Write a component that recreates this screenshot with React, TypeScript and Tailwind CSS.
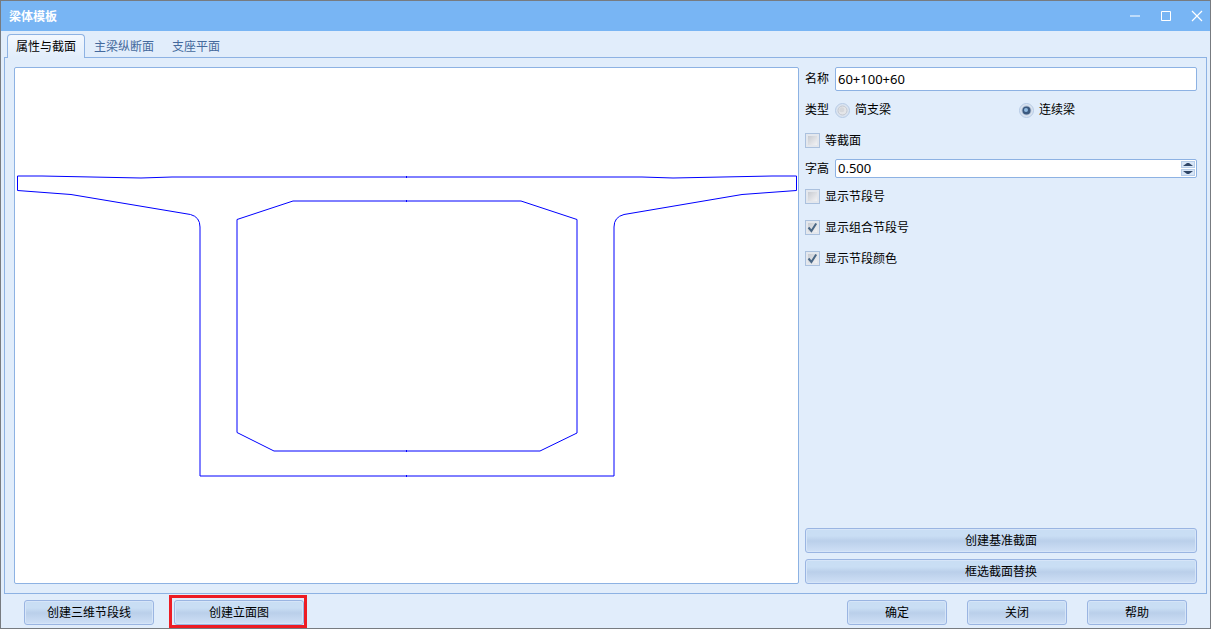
import { useState, type ReactNode } from "react";

function PushButton({ children, className = "" }: { children: ReactNode; className?: string }) {
  return (
    <button
      type="button"
      className={`h-[25px] rounded-[3px] border border-[#9ab5e2] bg-linear-to-b from-[#c9def4] from-30% via-[#bacfea] via-52% to-[#cfe0f6] text-black inset-shadow-[0_0_0_1px_#d6e5f8] ${className}`}
    >
      {children}
    </button>
  );
}

function CheckRow({ label, initial = false, className = "" }: { label: string; initial?: boolean; className?: string }) {
  const [checked, setChecked] = useState(initial);
  return (
    <label className={`flex h-[15px] items-center gap-[5px] ${className}`}>
      <span className="grid size-[15px]">
        <input
          type="checkbox"
          checked={checked}
          onChange={() => setChecked(!checked)}
          className="col-start-1 row-start-1 size-[15px] appearance-none border border-[#abc1de] bg-linear-to-br from-[#bfc3ca] to-[#fbfbfc] inset-shadow-[0_0_0_2px_#e3e7ed]"
        />
        {checked && (
          <svg viewBox="0 0 15 15" className="pointer-events-none col-start-1 row-start-1 size-[15px]">
            <path d="M3.5 7.5 6.4 11 11.2 3.5" fill="none" stroke="#4a6785" strokeWidth="2" />
          </svg>
        )}
      </span>
      {label}
    </label>
  );
}

function RadioOption({ label, checked, onSelect }: { label: string; checked: boolean; onSelect: () => void }) {
  return (
    <label className="flex h-[15px] items-center gap-[5px]">
      <span className="grid size-[15px]">
        <input
          type="radio"
          name="beam-type"
          checked={checked}
          onChange={onSelect}
          className="col-start-1 row-start-1 size-[15px] appearance-none rounded-full border border-[#b6cbe6] bg-[#dbe4f0]"
        />
        <svg viewBox="0 0 15 15" className="pointer-events-none col-start-1 row-start-1 size-[15px]">
          {checked ? (
            <>
              <circle cx="7.5" cy="7.5" r="5" fill="#b3c1d5" />
              <circle cx="7.5" cy="7.5" r="4" fill="#3b597f" />
              <circle cx="7" cy="7" r="2" fill="#8fb9df" />
            </>
          ) : (
            <>
              <circle cx="7.5" cy="7.5" r="4.5" fill="#e4e6e9" stroke="#c4c9d1" />
              <circle cx="6.8" cy="6.8" r="2.5" fill="#d6d8dc" />
            </>
          )}
        </svg>
      </span>
      {label}
    </label>
  );
}

function SectionDrawing() {
  return (
    <svg
      viewBox="15 68 783 515"
      className="h-full w-full"
      fill="none"
      stroke="#0000ff"
      strokeWidth="1"
      role="img"
      aria-label="截面"
    >
      <path d="M17.5 176 H42 L141 178 L172 177 H642 L673 178 L772 176 H796.5 V190.5 L742 194.5 L624 214.5 Q614 217 614 227 V476 H200 V227 Q200 217 190.5 214.5 L71 194.5 L17.5 190.5 Z" />
      <path d="M293 201 H521 L577 219.5 V433 L540 451 H274 L237 432.5 V219.5 Z" />
      <path d="M406.5 176V178M406.5 200V202M406.5 450V452M406.5 475V477" />
    </svg>
  );
}

const tabs = ["属性与截面", "主梁纵断面", "支座平面"];

export default function App() {
  const [tab, setTab] = useState(0);
  const [beamType, setBeamType] = useState("continuous");
  const [name, setName] = useState("60+100+60");
  const [textHeight, setTextHeight] = useState(0.5);

  return (
    <div className="flex min-h-screen flex-col border border-[#777b80] bg-[#e1edfb] font-['Noto_Sans','Noto_Sans_CJK_SC',sans-serif] text-xs text-black">
      <header className="flex h-[30px] items-center justify-between bg-[#78b5f4] pl-2 text-white">
        <h1 className="pt-[2px] text-xs font-bold">梁体模板</h1>
        <div className="flex gap-1">
          <button type="button" aria-label="最小化" className="grid h-[30px] w-[27px] place-items-center">
            <svg viewBox="0 0 12 12" className="size-3" stroke="#bddbfa" strokeWidth="2">
              <path d="M1 6H11" />
            </svg>
          </button>
          <button type="button" aria-label="最大化" className="grid h-[30px] w-[27px] place-items-center">
            <svg viewBox="0 0 12 12" className="size-3" fill="none" stroke="white">
              <path d="M1.5 1.5H10.5V10.5H1.5Z" />
            </svg>
          </button>
          <button type="button" aria-label="关闭窗口" className="grid h-[30px] w-[27px] place-items-center">
            <svg viewBox="0 0 12 12" className="size-3" stroke="white" strokeWidth="1.2">
              <path d="M1 1 11 11M11 1 1 11" />
            </svg>
          </button>
        </div>
      </header>

      <main className="flex grow flex-col px-[3px] pt-[3px]">
        <div role="tablist" className="flex h-[23px] pl-[3px]">
          {tabs.map((label, i) => (
            <button
              key={label}
              type="button"
              role="tab"
              aria-selected={tab === i}
              onClick={() => setTab(i)}
              className={
                tab === i
                  ? "z-10 -mb-px rounded-t border border-b-0 border-[#8db2e3] bg-linear-to-b from-[#f3f8fe] to-[#e1edfb] px-2 text-black"
                  : "px-[9px] pt-[2px] text-[#44699c]"
              }
            >
              {label}
            </button>
          ))}
        </div>

        <section className="flex grow gap-[6px] border border-[#8db2e3] p-[9px]">
          <div className="h-[517px] min-w-0 grow basis-0 rounded-xs border border-[#8db2e3] bg-white">
            <SectionDrawing />
          </div>

          <form className="flex w-[392px] shrink-0 flex-col" onSubmit={(e) => e.preventDefault()}>
            <div className="flex h-6 items-center gap-[6px]">
              <label htmlFor="beam-name" className="w-6">名称</label>
              <input
                id="beam-name"
                type="text"
                value={name}
                onChange={(e) => setName(e.target.value)}
                className="h-6 min-w-0 grow rounded-xs border border-[#8db2e3] bg-white px-[2px] text-[13px] outline-none"
              />
            </div>

            <fieldset className="mt-[11px] flex h-[15px] items-center gap-[6px]" aria-labelledby="beam-type-label">
              <span id="beam-type-label" className="w-6">类型</span>
              <div className="grid grow grid-cols-2 gap-[6px]">
                <RadioOption label="简支梁" checked={beamType === "simple"} onSelect={() => setBeamType("simple")} />
                <RadioOption label="连续梁" checked={beamType === "continuous"} onSelect={() => setBeamType("continuous")} />
              </div>
            </fieldset>

            <CheckRow label="等截面" className="mt-4" />

            <div className="mt-[11px] flex h-[19px] items-center gap-[6px]">
              <label htmlFor="text-height" className="w-6">字高</label>
              <div className="flex h-[19px] min-w-0 grow rounded-xs border border-[#8db2e3] bg-white p-px">
                <input
                  id="text-height"
                  type="text"
                  inputMode="decimal"
                  readOnly
                  value={textHeight.toFixed(3)}
                  className="min-w-0 grow px-px text-[13px] leading-[15px] outline-none"
                />
                <div className="flex w-[14px] flex-col gap-px">
                  <button
                    type="button"
                    aria-label="增大"
                    onClick={() => setTextHeight(textHeight + 0.1)}
                    className="grid h-[7px] place-items-center border border-[#b7cde9] bg-[#d7e5f6]"
                  >
                    <svg viewBox="0 0 10 3" className="h-[3px] w-[10px]" fill="#2f4667">
                      <path d="M0 3 4 0H6L10 3Z" />
                    </svg>
                  </button>
                  <button
                    type="button"
                    aria-label="减小"
                    onClick={() => setTextHeight(textHeight - 0.1)}
                    className="grid h-[7px] place-items-center border border-[#b7cde9] bg-[#d7e5f6]"
                  >
                    <svg viewBox="0 0 10 3" className="h-[3px] w-[10px]" fill="#2f4667">
                      <path d="M0 0 4 3H6L10 0Z" />
                    </svg>
                  </button>
                </div>
              </div>
            </div>

            <CheckRow label="显示节段号" className="mt-[11px]" />
            <CheckRow label="显示组合节段号" initial className="mt-4" />
            <CheckRow label="显示节段颜色" initial className="mt-4" />

            <div className="mt-auto flex flex-col gap-[6px]">
              <PushButton>创建基准截面</PushButton>
              <PushButton>框选截面替换</PushButton>
            </div>
          </form>
        </section>
      </main>

      <footer className="flex items-center justify-between px-[23px] pt-[6px] pb-[3px]">
        <div className="flex gap-5">
          <PushButton className="w-[130px]">创建三维节段线</PushButton>
          <div className="relative">
            <PushButton className="w-[130px]">创建立面图</PushButton>
            <div className="pointer-events-none absolute -top-[5px] -right-[3px] -bottom-[3px] -left-[5px] border-3 border-[#ed1c24]" />
          </div>
        </div>
        <div className="flex gap-5">
          <PushButton className="w-[100px]">确定</PushButton>
          <PushButton className="w-[100px]">关闭</PushButton>
          <PushButton className="w-[100px]">帮助</PushButton>
        </div>
      </footer>
    </div>
  );
}
